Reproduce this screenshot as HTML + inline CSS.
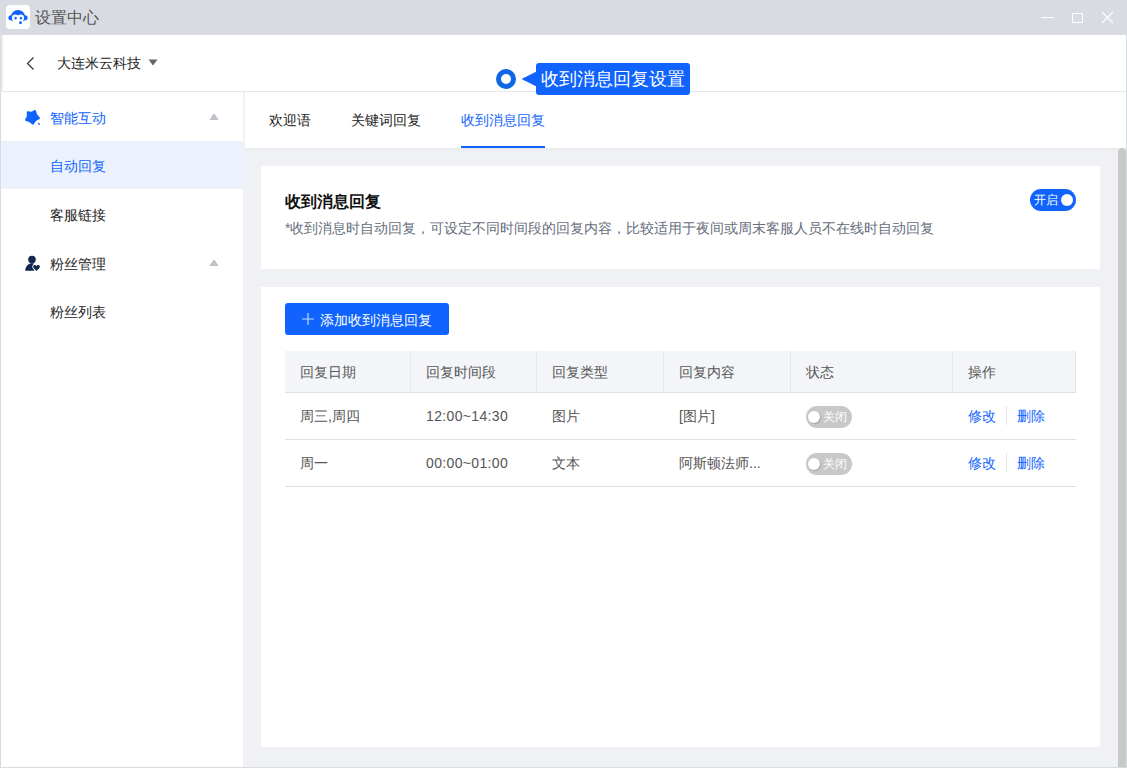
<!DOCTYPE html>
<html><head><meta charset="utf-8">
<style>
*{box-sizing:border-box;margin:0;padding:0}
html,body{width:1127px;height:768px;overflow:hidden;background:#d9dbe3}
body{position:relative;font-family:"Liberation Sans",sans-serif;font-size:14px;color:#333}
.a{position:absolute}
.t{position:absolute;white-space:nowrap;line-height:20px;height:20px}
#titlebar{left:0;top:0;width:1127px;height:35px;background:#d9dbe3}
#win{left:1px;top:35px;width:1125px;height:732px;background:#fff;border-left:2px solid #eaecf0}
#hdrline{left:0;top:91px;width:1126px;height:1px;background:#e6e8ed}
#side{left:1px;top:92px;width:242px;height:675px;background:#fff}
#main{left:243px;top:92px;width:883px;height:675px;background:#eff1f5}
#tabs{left:245px;top:92px;width:881px;height:56px;background:#fff}
.card{position:absolute;background:#fff}
.blue{color:#1064fd}
.gray{color:#666d7c}
th,td{font-weight:normal}
.row-line{position:absolute;left:285px;width:791px;height:1px;background:#dedfe1}
.vsep{position:absolute;top:351px;width:1px;height:41px;background:#e4e6ea}
.cell{position:absolute;white-space:nowrap;line-height:20px;color:#555}
.off{position:absolute;width:46px;height:22px;border-radius:11px;background:#c8c8c8}
.off .k{position:absolute;left:2px;top:5px;width:12px;height:12px;border-radius:50%;background:#fff;box-shadow:1px 1px 1px rgba(0,0,0,.18)}
.off .l{position:absolute;left:17px;top:0;line-height:22px;font-size:12px;color:#fff}
.act{position:absolute;white-space:nowrap;line-height:20px;color:#1064fd}
.dv{position:absolute;width:1px;height:19px;background:#e2e4ea}
</style></head><body>
<div id="titlebar" class="a"></div>
<!-- logo -->
<div class="a" style="left:6px;top:5px;width:24px;height:24px;background:#fff;border-radius:4px"></div>
<svg class="a" style="left:6px;top:5px" width="24" height="24" viewBox="0 0 24 24">
  <g fill="#1064fd">
    <circle cx="12" cy="12.2" r="7.2"/>
    <ellipse cx="4.8" cy="12.8" rx="2.4" ry="2.6"/>
    <ellipse cx="19.2" cy="12.8" rx="2.4" ry="2.6"/>
  </g>
  <g fill="#fff">
    <circle cx="9.3" cy="12.9" r="3.3"/>
    <circle cx="14.7" cy="12.9" r="3.3"/>
    <path d="M6.1 13 L7.3 15.9 L3.5 15.6 L3 24 L21 24 L20.5 15.6 L16.9 15.9 L17.9 13 Z"/>
  </g>
  <g fill="#1064fd">
    <ellipse cx="9.6" cy="13.1" rx="1.25" ry="1.3" transform="rotate(30 9.6 13.1)"/>
    <ellipse cx="14.9" cy="13.1" rx="1.25" ry="1.3" transform="rotate(30 14.9 13.1)"/>
    <circle cx="14.5" cy="17.7" r="1.45"/>
  </g>
</svg>
<div class="t" style="left:35px;top:8px;font-size:16px;color:#555">设置中心</div>
<!-- window controls -->
<div class="a" style="left:1041px;top:17px;width:13px;height:1px;background:#fff"></div>
<div class="a" style="left:1072px;top:13px;width:11px;height:10px;border:1px solid #fff"></div>
<svg class="a" style="left:1101px;top:11px" width="13" height="13" viewBox="0 0 13 13"><path d="M1 1 L12 12 M12 1 L1 12" stroke="#fff" stroke-width="1.1"/></svg>

<div id="win" class="a"></div>
<!-- header -->
<svg class="a" style="left:26px;top:57px" width="9" height="13" viewBox="0 0 9 13"><path d="M7.5 0.5 L1.5 6.5 L7.5 12.5" fill="none" stroke="#333" stroke-width="1.2"/></svg>
<div class="t" style="left:57px;top:53px;color:#222">大连米云科技</div>
<svg class="a" style="left:148px;top:59px" width="10" height="7" viewBox="0 0 10 7"><path d="M0.5 0.5 L9.5 0.5 L5 6.5 Z" fill="#666"/></svg>

<div id="hdrline" class="a"></div>
<div id="side" class="a"></div>
<div id="main" class="a"></div>
<div id="tabs" class="a"></div>
<div class="a" style="left:245px;top:148px;width:873px;height:4px;background:linear-gradient(rgba(0,0,0,.035),rgba(0,0,0,0))"></div>

<!-- tooltip -->
<div class="a" style="left:496px;top:69px;width:20px;height:20px;border-radius:50%;border:5px solid #0f66e6;background:#fff"></div>
<svg class="a" style="left:521px;top:71px" width="16" height="16" viewBox="0 0 16 16"><path d="M0.5 8 L15.5 0.5 L15.5 15.5 Z" fill="#1064fd"/></svg>
<div class="a" style="left:536px;top:63px;width:154px;height:32px;background:#1064fd;border-radius:3px"></div>
<div class="t" style="left:541px;top:68px;font-size:18px;line-height:22px;height:22px;color:#fff">收到消息回复设置</div>

<!-- sidebar -->
<svg class="a" style="left:20px;top:106px" width="24" height="24" viewBox="0 0 24 24">
  <path transform="translate(12.3 11.6) scale(1.07) translate(-12.3 -11.6)" fill="#1064fd" stroke="#1064fd" stroke-width="1.8" stroke-linejoin="round" d="M8 6.5 L11.6 7.1 L14.8 5.4 L16.1 9.2 L18.6 12.1 L15.2 14.1 L12.9 17.4 L10.1 15 L6.4 13.8 L8.1 10.4 Z"/>
  <path d="M18.4 17.4 L19.4 18.4" stroke="#1064fd" stroke-width="1.2" stroke-linecap="round"/>
</svg>
<div class="t blue" style="left:50px;top:108px">智能互动</div>
<svg class="a" style="left:209px;top:113px" width="10" height="8" viewBox="0 0 10 8"><path d="M0.3 7 L9.7 7 L5.7 1 L4.3 1 Z" fill="#bfc4ca"/></svg>
<div class="a" style="left:1px;top:141px;width:242px;height:48px;background:#ebf2fe"></div>
<div class="t blue" style="left:50px;top:156px">自动回复</div>
<div class="t" style="left:50px;top:205px;color:#222">客服链接</div>
<svg class="a" style="left:21px;top:252px" width="24" height="24" viewBox="0 0 24 24">
  <g fill="#13264d">
    <circle cx="11" cy="7.6" r="3.8"/>
    <path d="M4.1 18.8 C4.4 14.6 6.8 12.1 9.6 11.2 L12.8 11.2 L12.6 11.9 C11.2 13.2 10.8 14.9 11.8 16.3 L13.6 18.8 Z"/>
    <path d="M15.5 18.9 L12.6 15.9 C11.6 14.8 12.2 13 13.8 13 C14.6 13 15.1 13.5 15.5 14 C15.9 13.5 16.4 13 17.2 13 C18.8 13 19.4 14.8 18.4 15.9 Z"/>
  </g>
</svg>
<div class="t" style="left:50px;top:254px;color:#222">粉丝管理</div>
<svg class="a" style="left:209px;top:259px" width="10" height="8" viewBox="0 0 10 8"><path d="M0.3 7 L9.7 7 L5.7 1 L4.3 1 Z" fill="#bfc4ca"/></svg>
<div class="t" style="left:50px;top:302px;color:#222">粉丝列表</div>

<!-- tabs -->
<div class="t" style="left:269px;top:110px;color:#222">欢迎语</div>
<div class="t" style="left:351px;top:110px;color:#222">关键词回复</div>
<div class="t blue" style="left:461px;top:110px">收到消息回复</div>
<div class="a" style="left:461px;top:146px;width:84px;height:2px;background:#1064fd"></div>

<!-- scrollbar -->
<div class="a" style="left:1118px;top:148px;width:8px;height:619px;background:#c9c9c9;border-radius:4px 4px 0 0"></div>

<!-- card 1 -->
<div class="card" style="left:261px;top:166px;width:839px;height:103px"></div>
<div class="t" style="left:285px;top:192px;font-size:16px;font-weight:bold;color:#111">收到消息回复</div>
<div class="t gray" style="left:285px;top:218px;font-size:14px">*收到消息时自动回复，可设定不同时间段的回复内容，比较适用于夜间或周末客服人员不在线时自动回复</div>
<div class="a" style="left:1030px;top:189px;width:46px;height:22px;border-radius:11px;background:#1064fd"></div>
<div class="t" style="left:1034px;top:190px;font-size:12px;color:#fff">开启</div>
<div class="a" style="left:1061px;top:194px;width:12px;height:12px;border-radius:50%;background:#fff"></div>

<!-- card 2 -->
<div class="card" style="left:261px;top:287px;width:839px;height:460px"></div>
<div class="a" style="left:285px;top:303px;width:164px;height:32px;border-radius:3px;background:#1064fd"></div>
<svg class="a" style="left:302px;top:313px" width="12" height="12" viewBox="0 0 12 12"><path d="M6 0 V12 M0 6 H12" stroke="rgba(255,255,255,.75)" stroke-width="1.2"/></svg>
<div class="t" style="left:320px;top:310px;color:#fff">添加收到消息回复</div>

<!-- table -->
<div class="a" style="left:285px;top:351px;width:791px;height:41px;background:#f4f5f9;border-right:1px solid #e4e6ea"></div>
<div class="vsep" style="left:410px"></div>
<div class="vsep" style="left:536px"></div>
<div class="vsep" style="left:663px"></div>
<div class="vsep" style="left:790px"></div>
<div class="vsep" style="left:952px"></div>
<div class="row-line" style="top:392px"></div>
<div class="row-line" style="top:439px"></div>
<div class="row-line" style="top:486px"></div>

<div class="cell" style="left:300px;top:362px">回复日期</div>
<div class="cell" style="left:426px;top:362px">回复时间段</div>
<div class="cell" style="left:552px;top:362px">回复类型</div>
<div class="cell" style="left:679px;top:362px">回复内容</div>
<div class="cell" style="left:806px;top:362px">状态</div>
<div class="cell" style="left:968px;top:362px">操作</div>

<div class="cell" style="left:300px;top:406px">周三,周四</div>
<div class="cell" style="left:426px;top:406px;letter-spacing:.35px">12:00~14:30</div>
<div class="cell" style="left:552px;top:406px">图片</div>
<div class="cell" style="left:679px;top:406px">[图片]</div>
<div class="off" style="left:806px;top:406px"><div class="k"></div><div class="l">关闭</div></div>
<div class="act" style="left:968px;top:406px">修改</div>
<div class="dv" style="left:1006px;top:406px"></div>
<div class="act" style="left:1017px;top:406px">删除</div>

<div class="cell" style="left:300px;top:453px">周一</div>
<div class="cell" style="left:426px;top:453px;letter-spacing:.35px">00:00~01:00</div>
<div class="cell" style="left:552px;top:453px">文本</div>
<div class="cell" style="left:679px;top:453px">阿斯顿法师...</div>
<div class="off" style="left:806px;top:453px"><div class="k"></div><div class="l">关闭</div></div>
<div class="act" style="left:968px;top:453px">修改</div>
<div class="dv" style="left:1006px;top:453px"></div>
<div class="act" style="left:1017px;top:453px">删除</div>

</body></html>
